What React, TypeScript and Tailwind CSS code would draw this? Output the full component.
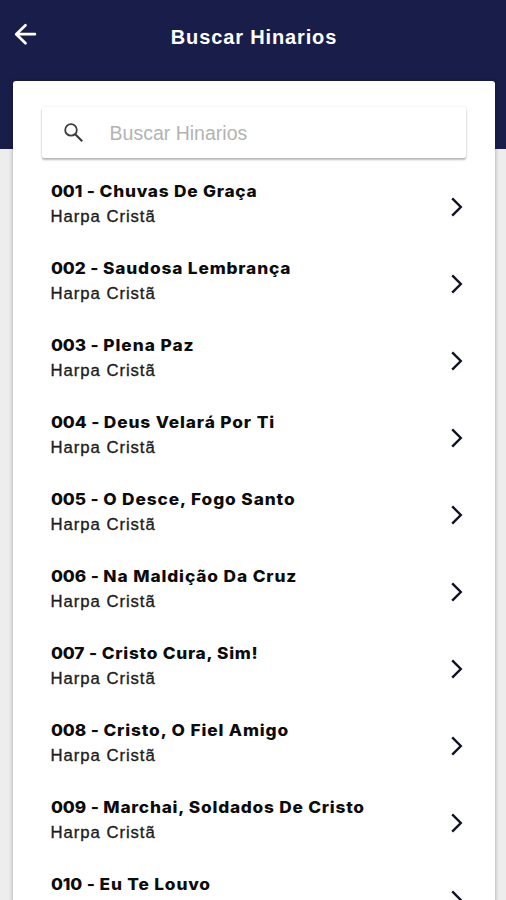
const hymns = [
  { number: "001", title: "Chuvas De Graça", book: "Harpa Cristã", tracking: "tracking-[0.71px]" },
  { number: "002", title: "Saudosa Lembrança", book: "Harpa Cristã", tracking: "tracking-[0.78px]" },
  { number: "003", title: "Plena Paz", book: "Harpa Cristã", tracking: "tracking-[0.89px]" },
  { number: "004", title: "Deus Velará Por Ti", book: "Harpa Cristã", tracking: "tracking-[0.81px]" },
  { number: "005", title: "O Desce, Fogo Santo", book: "Harpa Cristã", tracking: "tracking-[0.83px]" },
  { number: "006", title: "Na Maldição Da Cruz", book: "Harpa Cristã", tracking: "tracking-[0.82px]" },
  { number: "007", title: "Cristo Cura, Sim!", book: "Harpa Cristã", tracking: "tracking-[0.67px]" },
  { number: "008", title: "Cristo, O Fiel Amigo", book: "Harpa Cristã", tracking: "tracking-[0.8px]" },
  { number: "009", title: "Marchai, Soldados De Cristo", book: "Harpa Cristã", tracking: "tracking-[0.7px]" },
  { number: "010", title: "Eu Te Louvo", book: "", tracking: "tracking-[0.76px]" },
];

function Header() {
  return (
    <header className="grid h-[70px] grid-cols-[38px_1fr_36px] items-center">
      <button aria-label="Voltar" className="flex justify-end pb-[2px]">
        <svg width="24" height="24" viewBox="0 0 24 24" fill="none" stroke="#fff" strokeWidth="2.7" strokeLinecap="round" strokeLinejoin="round">
          <path d="M20.9 12.2H2.8M11.5 3.2L2.2 12.2L11.5 21.2" />
        </svg>
      </button>
      <h1 className="pt-[3px] text-center text-[20px] leading-6 font-bold tracking-[0.87px] text-white">Buscar Hinarios</h1>
    </header>
  );
}

function SearchBox() {
  return (
    <label className="flex h-[51px] items-center rounded-[2px] bg-white pl-[22px] shadow-[0_2px_2px_rgba(0,0,0,0.26),0_0_3px_rgba(0,0,0,0.1)]">
      <svg width="19" height="19" viewBox="0 0 19 19" fill="none" stroke="#3c3c3c" strokeWidth="1.8" className="shrink-0">
        <circle cx="7" cy="6.9" r="5.8" />
        <path d="M11.2 11.2L18.2 18.2" strokeWidth="2.2" />
      </svg>
      <input
        placeholder="Buscar Hinarios"
        className="ml-[27px] w-[300px] pt-[2px] text-[19.5px] outline-none placeholder:text-[#b3b3b3]"
      />
    </label>
  );
}

export default function App() {
  return (
    <div className="h-[900px] w-[506px] overflow-hidden bg-[linear-gradient(#191d4a_149px,#ededed_149px)] font-['Liberation_Sans',Arial,sans-serif]">
      <Header />
      <main className="mt-[11px] mr-[11.5px] ml-[12.6px] h-[900px] rounded-[3px] bg-white px-[29px] pt-[26px] shadow-[0_0_4px_rgba(0,0,0,0.32)]">
        <SearchBox />
        <ul className="pt-[11px]">
          {hymns.map((hymn) => (
            <li key={hymn.number} className="flex h-[77px] items-start justify-between pt-[10px] pr-[3px] pl-[9px]">
              <div className="whitespace-nowrap">
                <h2 className="mb-px origin-left scale-x-[1.08] font-['Inter',sans-serif] text-[16px] leading-[25px] font-extrabold text-[#0c0c0c]">
                  <span className="tracking-[-0.1px] [word-spacing:0.9px]">{hymn.number} - </span>
                  <span className={hymn.tracking}>{hymn.title}</span>
                </h2>
                <p className="text-[16.7px] leading-[24px] tracking-[0.95px] text-[#1c1c1c] [-webkit-text-stroke:0.35px_#1c1c1c]">{hymn.book}</p>
              </div>
              <svg width="12" height="20" viewBox="0 0 12 20" fill="none" stroke="#101029" strokeWidth="2.4" className="mt-[18px] shrink-0">
                <path d="M1.2 1.4L9.8 10L1.2 18.6" />
              </svg>
            </li>
          ))}
        </ul>
      </main>
    </div>
  );
}
